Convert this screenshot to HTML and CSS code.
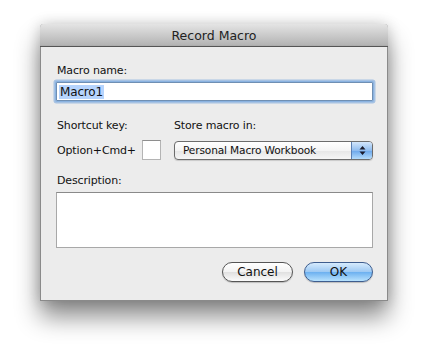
FILE: index.html
```html
<!DOCTYPE html>
<html>
<head>
<meta charset="utf-8">
<link rel="stylesheet" href="styles.css">
</head>
<body>
<div class="window">
  <div class="titlebar">Record Macro</div>
  <div class="content">
    <div class="label">Macro name:</div>
    <div class="field focused"><span class="sel">Macro1</span></div>
    <div class="row labels">
      <div class="col1">Shortcut key:</div>
      <div class="col2">Store macro in:</div>
    </div>
    <div class="row controls">
      <div class="col1 shortcut"><span>Option+Cmd+</span><div class="keybox"></div></div>
      <div class="col2 popup">
        <span class="popup-text">Personal Macro Workbook</span>
        <span class="stepper">
          <svg width="7" height="11" viewBox="0 0 7 11"><path d="M3.5 1 L6.5 4.5 L0.5 4.5 Z M3.5 10 L6.5 6.5 L0.5 6.5 Z" fill="#1a1a2a"/></svg>
        </span>
      </div>
    </div>
    <div class="label desc-label">Description:</div>
    <div class="textarea"></div>
    <div class="buttons">
      <div class="btn cancel">Cancel</div>
      <div class="btn ok">OK</div>
    </div>
  </div>
</div>
</body>
</html>
```
FILE: styles.css
```css
html, body {
  margin: 0;
  padding: 0;
  background: #ffffff;
}
body {
  width: 428px;
  height: 356px;
  overflow: hidden;
  padding: 24px 0 0 40px;
  box-sizing: border-box;
  font-family: "DejaVu Sans", "Lucida Grande", sans-serif;
  font-size: 11px;
  letter-spacing: -0.15px;
  color: #111;
}
.window {
  width: 348px;
  height: 277px;
  box-sizing: border-box;
  background: #ececec;
  border: 1px solid #8a8a8a;
  border-top: none;
  border-radius: 4px 4px 0 0;
  box-shadow: 0 16px 24px rgba(0,0,0,0.45), 0 0 14px rgba(0,0,0,0.18);
  display: flex;
  flex-direction: column;
}
.titlebar {
  height: 22px;
  margin: 0 -1px;
  border-radius: 4px 4px 0 0;
  background: linear-gradient(#e4e4e4, #b4b4b4 95%, #a8a8a8);
  border-bottom: 1px solid #555;
  text-align: center;
  font-size: 12.5px;
  letter-spacing: 0;
  line-height: 23px;
  color: #222;
}
.content {
  padding: 17px 14px 0 15px;
  display: flex;
  flex-direction: column;
}
.label {
  padding-left: 1px;
  line-height: 13px;
  height: 13px;
}
.field {
  margin-top: 5px;
  height: 19px;
  box-sizing: border-box;
  background: #fff;
  border: 1px solid #6f8fb3;
  box-shadow: 0 0 0 1px #8ab2e0, 0 0 0 2.5px rgba(110,160,220,0.55);
  border-radius: 1px;
  padding: 2px 2px 0 2px;
  font-size: 12px;
  line-height: 14px;
}
.sel {
  background: #b6d4fd;
  padding: 0 1px;
}
.row {
  display: flex;
}
.col1 {
  width: 118px;
  box-sizing: border-box;
  padding-left: 1px;
}
.col2 {
  flex: 1;
}
.labels {
  margin-top: 18px;
  line-height: 13px;
}
.controls {
  margin-top: 8px;
  height: 20px;
  align-items: center;
}
.shortcut {
  display: flex;
  align-items: center;
  gap: 6px;
  height: 20px;
}
.keybox {
  width: 19px;
  height: 20px;
  box-sizing: border-box;
  background: #fff;
  border: 1px solid #b4b4b4;
  border-top-color: #8e8e8e;
}
.popup {
  height: 19px;
  box-sizing: border-box;
  border: 1px solid #6c6c6c;
  border-radius: 4px;
  background: linear-gradient(#ffffff, #f4f4f4 50%, #e6e6e6 51%, #f6f6f6);
  display: flex;
  align-items: center;
  overflow: hidden;
  box-shadow: 0 1px 1px rgba(0,0,0,0.15);
}
.popup-text {
  flex: 1;
  padding-left: 8px;
  font-size: 10.6px;
}
.stepper {
  width: 20px;
  height: 100%;
  border-left: 1px solid #5b7fb2;
  background: linear-gradient(#d3e6fb, #8fbcef 50%, #6aa6ea 51%, #b4dcfc);
  display: flex;
  align-items: center;
  justify-content: center;
}
.desc-label {
  margin-top: 14px;
}
.textarea {
  margin-top: 5px;
  height: 56px;
  box-sizing: border-box;
  background: #fff;
  border: 1px solid #a8a8a8;
  border-top-color: #8a8a8a;
}
.buttons {
  display: flex;
  justify-content: flex-end;
  gap: 11px;
  margin-top: 14px;
}
.btn {
  height: 20px;
  box-sizing: border-box;
  border-radius: 10px;
  text-align: center;
  font-size: 12px;
  letter-spacing: 0;
  line-height: 18px;
}
.cancel {
  width: 71px;
  border: 1px solid #555;
  background: linear-gradient(#ffffff, #f2f2f2 50%, #e0e0e0 51%, #fbfbfb);
  box-shadow: 0 1px 1px rgba(0,0,0,0.2);
}
.ok {
  width: 69px;
  border: 1px solid #3e5d8e;
  background: linear-gradient(#d6ebfd, #9cc8f3 50%, #6cb0f0 51%, #b8e2fd);
  box-shadow: 0 1px 1px rgba(0,0,0,0.2);
}
```
